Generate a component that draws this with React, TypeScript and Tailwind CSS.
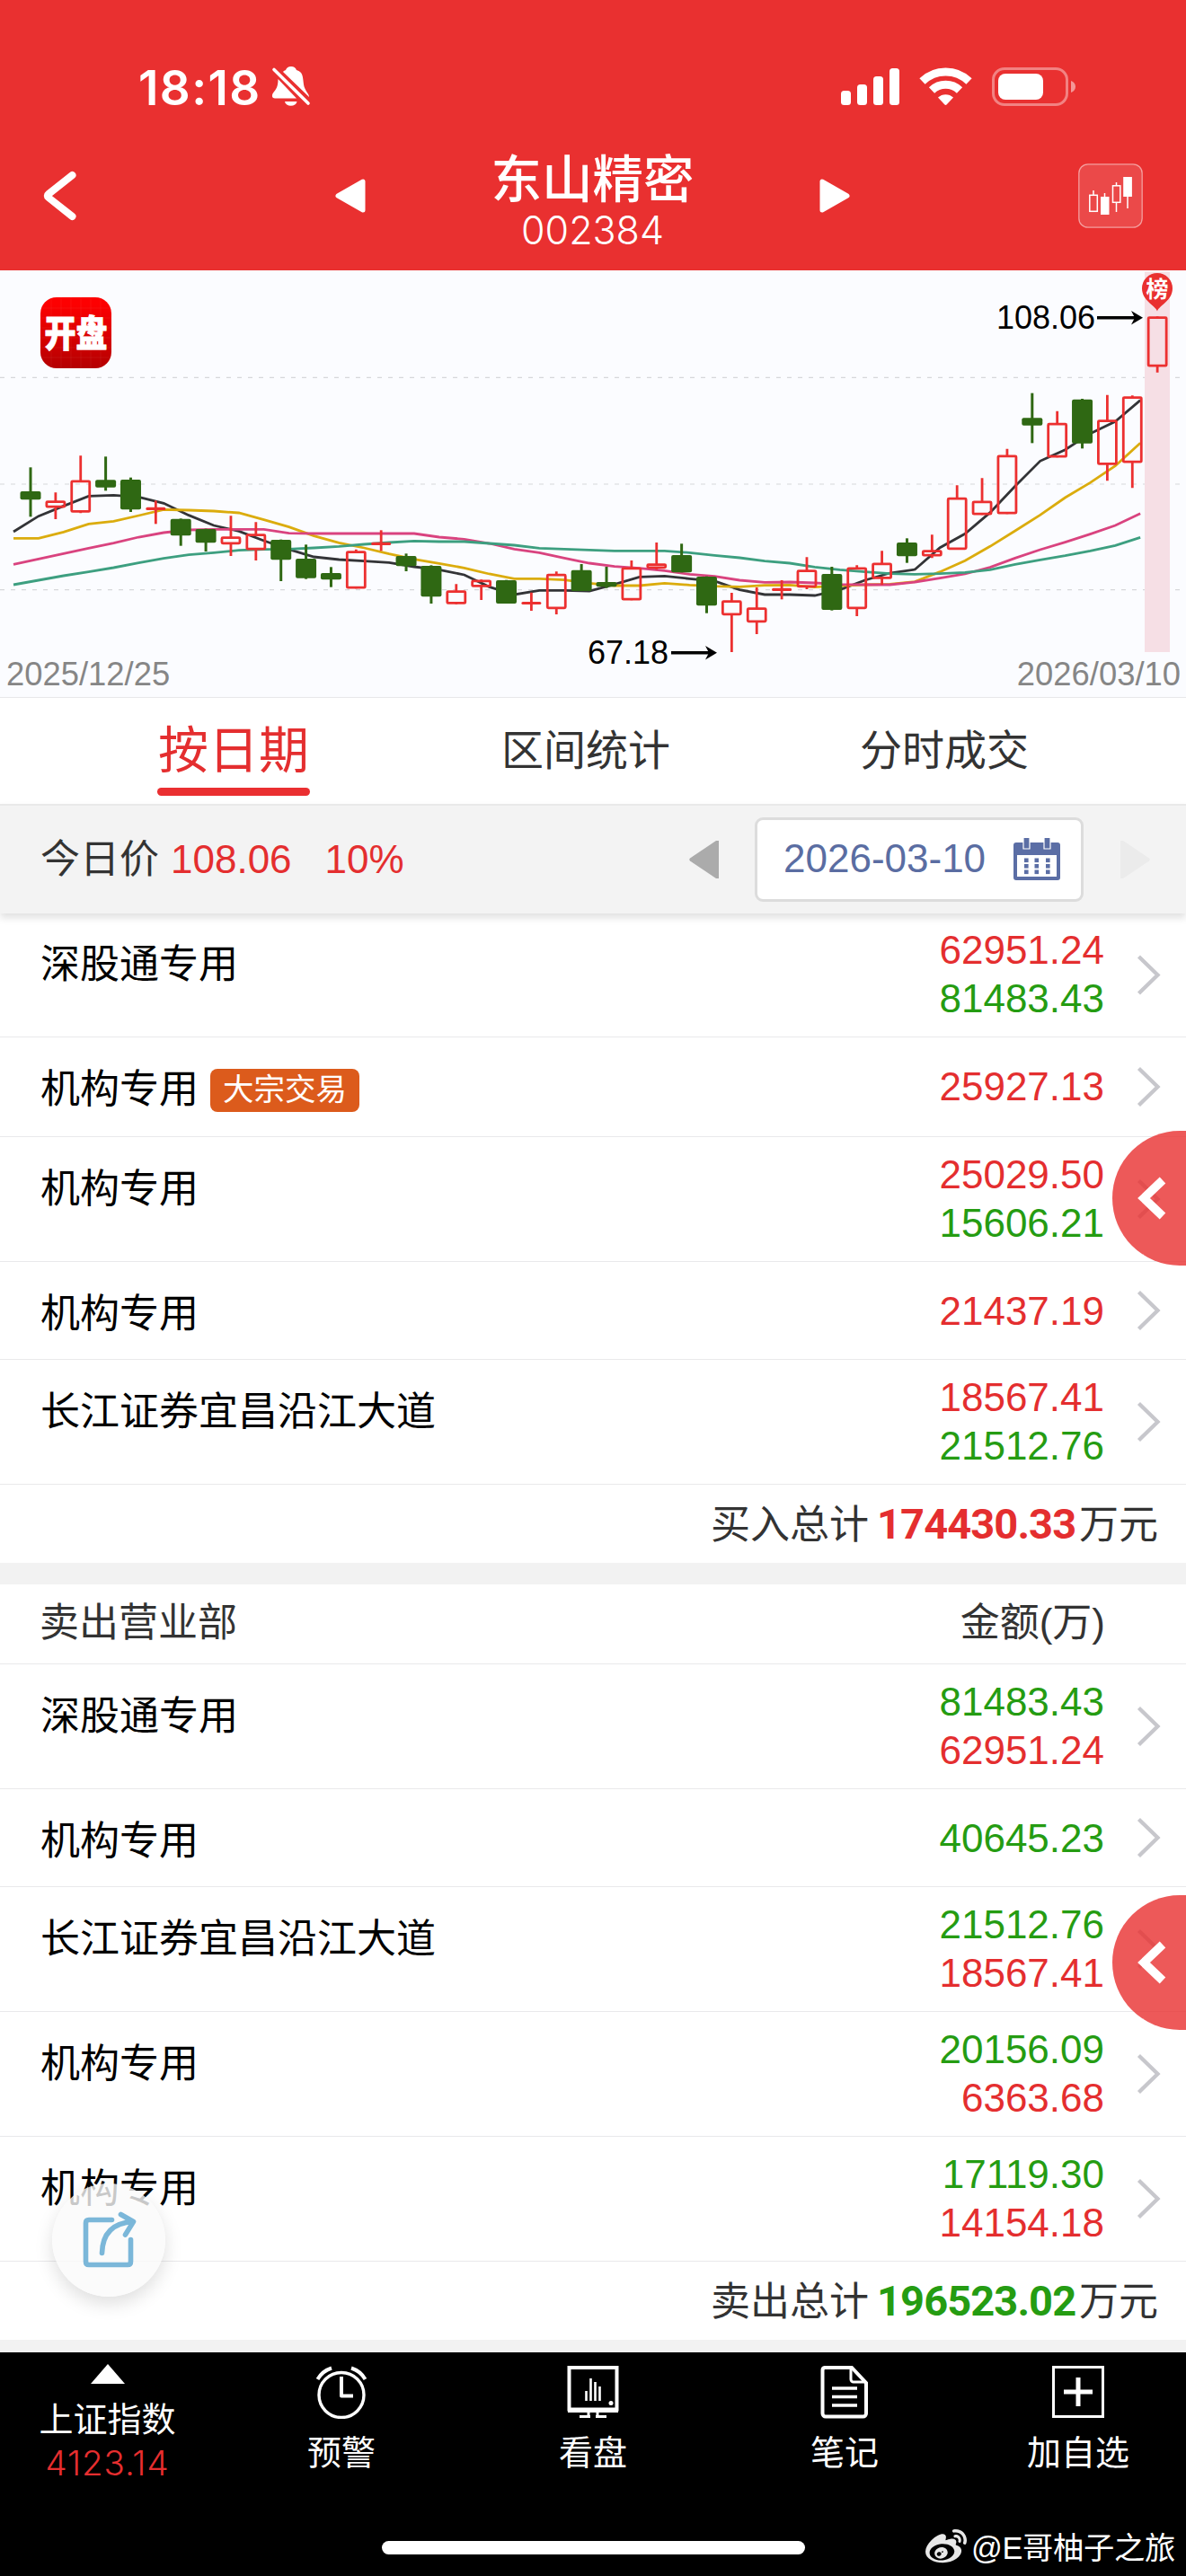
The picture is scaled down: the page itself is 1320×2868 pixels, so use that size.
import React from "react";
import { FaWeibo } from "react-icons/fa";

type Candle = [string, number, number, number, number];

// direction, high, body top, body bottom, low (thirds of a pixel)
const CANDLES: Candle[] = [
  ["g", 661, 741, 769, 826], ["r", 745, 772, 796, 834], ["r", 622, 704, 812, 814], ["g", 625, 703, 728, 739],
  ["g", 695, 702, 802, 810], ["r", 772, 794, 804, 850], ["g", 832, 833, 889, 923], ["g", 866, 867, 913, 942],
  ["r", 823, 892, 918, 957], ["r", 844, 883, 937, 972], ["g", 902, 903, 970, 1041], ["g", 919, 966, 1031, 1034],
  ["g", 994, 1014, 1036, 1061], ["r", 935, 940, 1066, 1066], ["r", 871, 911, 921, 940], ["g", 949, 957, 991, 1008],
  ["g", 988, 990, 1093, 1116], ["r", 1051, 1072, 1118, 1118], ["r", 1036, 1037, 1061, 1104], ["g", 1037, 1038, 1116, 1116],
  ["r", 1079, 1110, 1119, 1140], ["r", 1009, 1017, 1134, 1152], ["g", 984, 1004, 1074, 1074], ["g", 993, 1044, 1060, 1064],
  ["r", 972, 995, 1105, 1105], ["r", 912, 982, 999, 1003], ["g", 916, 954, 1012, 1012], ["g", 1025, 1026, 1123, 1148],
  ["r", 1080, 1105, 1155, 1278], ["r", 1062, 1129, 1179, 1218], ["r", 1038, 1064, 1074, 1102], ["r", 961, 1003, 1062, 1068],
  ["g", 993, 1017, 1137, 1139], ["r", 988, 995, 1134, 1158], ["r", 940, 980, 1034, 1054], ["g", 898, 912, 958, 980],
  ["r", 886, 937, 958, 964], ["r", 721, 762, 936, 936], ["r", 697, 773, 820, 820], ["r", 599, 620, 817, 817],
  ["g", 413, 496, 521, 580], ["r", 473, 513, 628, 628], ["g", 432, 434, 581, 598], ["r", 419, 502, 653, 706],
  ["r", 421, 424, 646, 730], ["r", 157, 157, 325, 344],
];

const AVERAGES = [
  { color: "#333437", values: [876, 824, 790, 757, 754, 760, 781, 821, 855, 874, 906, 935, 960, 969, 974, 979, 993, 1003, 1020, 1060, 1086, 1072, 1072, 1074, 1052, 1027, 1024, 1033, 1041, 1070, 1086, 1086, 1089, 1070, 1038, 1014, 1002, 929, 883, 812, 724, 640, 602, 548, 508, 437] },
  { color: "#dbac0d", values: [898, 898, 877, 850, 841, 822, 802, 804, 807, 813, 836, 860, 890, 913, 930, 950, 968, 982, 997, 1017, 1033, 1033, 1037, 1048, 1056, 1056, 1048, 1054, 1058, 1060, 1055, 1054, 1061, 1056, 1053, 1051, 1043, 1010, 973, 925, 873, 820, 762, 712, 656, 580] },
  { color: "#d9437f", values: [985, 967, 949, 931, 914, 894, 879, 870, 868, 868, 868, 881, 882, 882, 882, 882, 882, 894, 901, 915, 934, 946, 964, 981, 992, 998, 1006, 1018, 1025, 1038, 1045, 1044, 1047, 1052, 1053, 1053, 1044, 1031, 1017, 995, 964, 936, 911, 884, 855, 815] },
  { color: "#3d9f80", values: [1053, 1038, 1023, 1010, 996, 980, 965, 953, 946, 938, 935, 934, 930, 925, 918, 912, 907, 909, 909, 915, 921, 931, 934, 937, 940, 940, 940, 946, 955, 963, 974, 981, 994, 1003, 1010, 1016, 1018, 1016, 1012, 1003, 985, 970, 956, 940, 922, 895] },
];

const STEP = 27.87;

function CandleShape({ c, i }: { c: Candle; i: number }) {
  const x = 34 + STEP * i;
  const [dir, high, top, bottom, low] = [c[0], c[1] / 3, c[2] / 3, c[3] / 3, c[4] / 3];
  if (dir === "g") {
    return (
      <g fill="#2f6813">
        <rect x={x - 1.5} y={high} width={3} height={low - high} />
        <rect x={x - 11.5} y={top} width={23} height={bottom - top} rx={2} />
      </g>
    );
  }
  if (bottom - top < 4) {
    return (
      <g fill="#ec3030">
        <rect x={x - 1.4} y={high} width={2.8} height={low - high} />
        <rect x={x - 11} y={top} width={22} height={bottom - top} rx={1.5} />
      </g>
    );
  }
  return (
    <g stroke="#ec3030" strokeWidth={2.8} fill="none">
      <path d={`M${x} ${high}V${top + 1}M${x} ${bottom - 1}V${low}`} />
      <rect x={x - 10} y={top + 1.2} width={20} height={bottom - top - 2.4} rx={1} />
    </g>
  );
}

function Chart() {
  return (
    <svg className="block h-[475px] w-[1320px] bg-[#fbfcff]" viewBox="0 1 1320 475" fontFamily="'Liberation Sans','Noto Sans CJK SC',sans-serif">
      <defs>
        <linearGradient id="logo" x1="0" y1="0" x2="0" y2="1">
          <stop offset="0.1" stopColor="#fd0001" />
          <stop offset="1" stopColor="#b40001" />
        </linearGradient>
      </defs>
      {[120.3, 239, 356.7].map((y) => (
        <path key={y} d={`M0 ${y}H1320`} stroke="#d6d7da" strokeWidth={1.2} strokeDasharray="5 7" />
      ))}
      <rect x={1274} y={2.5} width={28} height={423.5} fill="#f6dfe5" />
      {AVERAGES.map((a) => (
        <polyline key={a.color} fill="none" stroke={a.color} strokeWidth={2.8} points={a.values.map((v, i) => `${15 + STEP * i},${v / 3}`).join(" ")} />
      ))}
      {CANDLES.map((c, i) => (
        <CandleShape key={i} c={c} i={i} />
      ))}
      <path d="M1288 46.5C1286 40 1271 35 1271 21a17 17 0 0 1 34 0C1305 35 1290 40 1288 46.5Z" fill="#e93030" />
      <text x={1288} y={30.5} fontSize={25} fontWeight={700} fill="#fff" textAnchor="middle">榜</text>
      <text x={1219} y={66} fontSize={36} textAnchor="end">108.06</text>
      <path d="M1221 53.7H1268" stroke="#000" strokeWidth={3.6} />
      <path d="M1259 46L1272 53.7L1259 61.5L1263 53.7Z" />
      <text x={744} y={439} fontSize={36} textAnchor="end">67.18</text>
      <path d="M747 426.8H794" stroke="#000" strokeWidth={3.6} />
      <path d="M785 419L798 426.8L785 434.6L789 426.8Z" />
      <text x={7} y={462.7} fontSize={36.4} fill="#868686">2025/12/25</text>
      <text x={1314} y={462.7} fontSize={36.4} fill="#868686" textAnchor="end">2026/03/10</text>
      <rect x={45} y={31} width={79} height={79} rx={18} fill="url(#logo)" />
      <path d="M57 31V110M68 31V110M79 31V110M90 31V110M101 31V110M112 31V110M45 43H124M45 54H124M45 65H124M45 76H124M45 87H124M45 98H124" stroke="#fff" strokeOpacity={0.06} />
      <text transform="translate(84.5 86) scale(1 1.18)" fontSize={35} fontWeight={900} fill="#fff" stroke="#fff" strokeWidth={0.8} textAnchor="middle">开盘</text>
    </svg>
  );
}

function StatusBar() {
  return (
    <div className="flex h-[150px] items-start pl-[154px] pr-[121px] pt-[72px] text-white">
      <span className="w-[140px] whitespace-nowrap font-['Inter'] text-[53px] font-semibold leading-[52px] tracking-[1.400px]">18:18</span>
      <svg className="ml-[8px] h-[48px] w-[46px]" viewBox="302 74 46 48" fill="#fff">
        <path d="M324 76c-3 0-5 1.500-6 4c-1.500.5-2 1-3 2L344 110c0-4-5-7-6-14c-1-8-.5-14-8-16c-1-2.500-3-4-6-4Z" />
        <path d="M309.500 90L330 111.500H306c-3 0-4-3-2-6c3-4 5.500-6 5.500-15.500Z" />
        <path d="M317 115h13.500a6.800 5.500 0 0 1-13.500 0Z" />
        <path d="M305 79.500L343 117" stroke="#fff" strokeWidth={3.6} strokeLinecap="round" />
      </svg>
      <div className="flex-1" />
      <svg className="h-[48px] w-[264px]" viewBox="936 72 264 48" fill="#fff">
        <rect x={937} y={101} width={11} height={16} rx={3.500} />
        <rect x={955} y={94} width={11} height={23} rx={3.500} />
        <rect x={973} y={85} width={11} height={32} rx={3.500} />
        <rect x={991} y={76} width={11} height={41} rx={3.500} />
        <g fill="none" stroke="#fff" strokeWidth={9}>
          <path d="M1027.500 90.500A37.500 37.500 0 0 1 1079.500 90.500" />
          <path d="M1038 100.500A22.500 22.500 0 0 1 1069 100.500" />
        </g>
        <path d="M1045 108.500A12.500 12.500 0 0 1 1062 108.500L1054.800 116.200a1.800 1.800 0 0 1-2.600 0Z" />
        <rect x={1106.500} y={76.500} width={82} height={40} rx={12.500} fill="none" stroke="#fff" strokeOpacity={0.4} strokeWidth={3} />
        <rect x={1112} y={82} width={50} height={29} rx={8} />
        <path d="M1193 90c3 1 5 3.500 5 6.500s-2 5.500-5 6.500Z" fillOpacity={0.5} />
      </svg>
    </div>
  );
}

function TitleBar() {
  return (
    <div className="flex h-[151px] items-start pl-[46px] pr-[48px] pt-[19px] text-white">
      <svg className="mt-[20px] h-[58px] w-[40px]" viewBox="46 189 40 58" fill="none">
        <path d="M80.500 195L54 216q-2.500 2 0 4L80.500 241" stroke="#fff" strokeWidth={8} strokeLinecap="round" />
      </svg>
      <div className="ml-[285px] flex w-[577px] items-start justify-between">
        <svg className="mt-[29px] h-[40px] w-[36px]" viewBox="0 0 36 40">
          <path d="M33 4V36L5 20Z" fill="#fff" stroke="#fff" strokeWidth={5} strokeLinejoin="round" />
        </svg>
        <div className="flex flex-col items-center">
          <div className="text-[56.500px] font-medium leading-[64px]">东山精密</div>
          <div className="mt-[-7px] font-['Inter'] text-[43px] font-light leading-[60px]">002384</div>
        </div>
        <svg className="mt-[29px] h-[40px] w-[36px]" viewBox="0 0 36 40">
          <path d="M3 4V36L31 20Z" fill="#fff" stroke="#fff" strokeWidth={5} strokeLinejoin="round" />
        </svg>
      </div>
      <svg className="ml-auto mt-[13px] h-[72px] w-[72px]" viewBox="1200 182 72 72">
        <rect x={1200.800} y={182.800} width={70.400} height={70.400} rx={10} fill="#fff" fillOpacity={0.12} stroke="#fff" strokeOpacity={0.5} strokeWidth={1.300} />
        <g stroke="#fff" strokeWidth={1.500} fill="none">
          <path d="M1217 212V217M1229.500 215V220M1242.500 203V207M1242.500 226V236M1255 218V232" />
          <rect x={1212.800} y={217.300} width={8.500} height={18} />
          <rect x={1238.500} y={206.800} width={8.300} height={18.500} />
        </g>
        <path d="M1225 219h9.500v20h-9.500zM1250.200 197h9.700v22h-9.700z" fill="#fff" />
      </svg>
    </div>
  );
}

function Tabs() {
  return (
    <div className="flex h-[119px] items-start border-t border-[#e8e8ea] bg-white pl-[175px] text-[47px] text-[#333]">
      <div className="flex w-[170px] flex-col items-center text-[#e42e2f]">
        <div className="mt-[19px] text-[56px] leading-[80px]">按日期</div>
        <div className="mt-[1px] h-[9px] w-[170px] rounded-full bg-[#ea2f31]" />
      </div>
      <div className="ml-[213px] mt-[19px] leading-[80px]">区间统计</div>
      <div className="ml-[211px] mt-[19px] leading-[80px]">分时成交</div>
    </div>
  );
}

function DateBar() {
  return (
    <div className="relative z-10 flex h-[122px] items-center border-t-2 border-[#e9e9e9] bg-[#f3f3f3] pl-[45px] text-[44px] shadow-[0_5px_8px_rgba(0,0,0,0.12)]">
      <span className="text-[#333]">今日价</span>
      <span className="ml-[13px] text-[#e42e2f]">108.06</span>
      <span className="ml-[37px] text-[#e42e2f]">10%</span>
      <div className="flex-1" />
      <svg className="h-[42px] w-[34px]" viewBox="0 0 34 42">
        <path d="M33 0V42H30L1 22.500q-1.500-1.500 0-3L30 0Z" fill="#ababab" />
      </svg>
      <div className="ml-[39px] flex h-[94px] w-[366px] items-center rounded-[9px] border-[3px] border-[#dcdcdc] bg-white pl-[29px] text-[#5a6da2]">
        <span className="mt-[-3px] w-[226px]">2026-03-10</span>
        <svg className="ml-[30px] h-[48px] w-[52px]" viewBox="0 0 52 48">
          <path d="M3 5H49a3 3 0 0 1 3 3V44a3 3 0 0 1-3 3H3a3 3 0 0 1-3-3V8A3 3 0 0 1 3 5Z" fill="#5b6ea5" />
          <path d="M4 19H48V43H4Z" fill="#fff" />
          <path d="M11 -1h7v13h-7zM34 -1h7v13h-7z" fill="#5b6ea5" stroke="#fff" strokeWidth={1.200} />
          <g fill="#5b6ea5">
            {[12, 23.500, 36].map((x) => [22.500, 29, 35.500].map((y) => <rect key={`${x}-${y}`} x={x} y={y} width={4.600} height={4.600} />))}
          </g>
        </svg>
      </div>
      <svg className="ml-[40px] mr-[40px] h-[42px] w-[34px]" viewBox="0 0 34 42">
        <path d="M1 0V42H4L33 22.500q1.500-1.500 0-3L4 0Z" fill="#ebebeb" />
      </svg>
    </div>
  );
}

type RowProps = { name: string; amounts: [string, "buy" | "sell"][]; height: string; badge?: string; trim?: boolean };

function Row({ name, amounts, height, badge, trim }: RowProps) {
  return (
    <div className={`flex items-start border-b border-[#e9e9eb] pl-[45px] text-[44px] ${height}`}>
      <span className={`leading-[60px] text-black ${trim ? "mt-[27px]" : "mt-[28px]"}`}>{name}</span>
      {badge && <span className="ml-[13px] mt-[35px] h-[48px] w-[166px] rounded-[8px] bg-[#dc5b1c] text-center text-[34.500px] leading-[46px] text-white">{badge}</span>}
      <div className="flex-1" />
      <div className={`text-right leading-[54px] ${amounts.length === 1 ? "mt-[28px]" : trim ? "mt-[14px]" : "mt-[15px]"}`}>
        {amounts.map(([v, k]) => (
          <div key={v} className={k === "buy" ? "text-[#e42e2f]" : "text-[#259c12]"}>{v}</div>
        ))}
      </div>
      <svg className="ml-[35px] mr-[26px] h-full w-[30px]" viewBox="0 0 30 46" fill="none">
        <path d="M3.500 2.500L24.500 23L3.500 43.500" stroke="#c7c7cc" strokeWidth={4.300} />
      </svg>
    </div>
  );
}

function Total({ label, value, tone }: { label: string; value: string; tone: string }) {
  return (
    <div className="flex h-[87px] items-center justify-end pr-[31px] pt-[2px] text-[44px] text-[#333]">
      <span>{label}</span>
      <span className={`ml-[9px] mr-[6px] w-[219px] text-center font-['Roboto'] text-[47px] font-bold tracking-[-0.900px] ${tone}`}>{value}</span>
      <span>万元</span>
    </div>
  );
}

function SideHandle({ place }: { place: string }) {
  return (
    <div className={`absolute right-0 z-20 flex h-[150px] w-[82px] items-center rounded-l-full bg-[#e93030]/80 pl-[28px] ${place}`}>
      <svg className="h-[50px] w-[34px]" viewBox="0 0 34 50" fill="none">
        <path d="M28 5L7 25L28 45" stroke="#fff" strokeWidth={9.500} />
      </svg>
    </div>
  );
}

function NavItem({ label, children, width }: { label: string; children: React.ReactNode; width: string }) {
  return (
    <div className={`flex flex-col items-center pt-[14px] ${width}`}>
      <svg className="h-[60px] w-[60px]" viewBox="0 0 60 60" fill="none" stroke="#fff" strokeWidth={3.400}>{children}</svg>
      <div className="mt-[10px] text-[38px] leading-[56px]">{label}</div>
    </div>
  );
}

function BottomBar() {
  return (
    <div className="relative h-[249px] bg-black text-white">
      <div className="flex">
        <div className="flex w-[239px] flex-col items-center">
          <svg className="mt-[13px] h-[22px] w-[38px]" viewBox="0 0 38 22"><path d="M19 0L38 22H0Z" fill="#fff" /></svg>
          <div className="mt-[12px] text-[38px] leading-[56px]">上证指数</div>
          <div className="mt-[-2px] font-['Inter'] text-[38.500px] font-light leading-[44px] tracking-[0.900px] text-[#e62e2f]">4123.14</div>
        </div>
        <NavItem label="预警" width="w-[282px]">
          <circle cx={30} cy={33.500} r={25} />
          <path d="M30 13V34.500H43" strokeWidth={4} strokeLinejoin="round" />
          <path d="M3.500 16Q8.500 7 19 3.500M56.500 16Q51.500 7 41 3.500" strokeWidth={4} />
        </NavItem>
        <NavItem label="看盘" width="w-[278px]">
          <path d="M3.500 3H56.500V49.500H3.500Z" strokeWidth={4} />
          <path d="M2 50.500H58" strokeWidth={5} />
          <path d="M15 57.500H27M33 57.500H45M25 52V58M35 52V58" strokeWidth={3} />
          <path d="M22.500 29V40M27.500 15V40M32.500 19V40M37.500 24V40" strokeWidth={2.600} />
          <circle cx={50} cy={42.500} r={2.500} fill="#fff" stroke="none" />
        </NavItem>
        <NavItem label="笔记" width="w-[282px]">
          <path d="M8 3H38L54 20V54a3.500 3.500 0 0 1-3.500 3.500H9A3.500 3.500 0 0 1 5.500 54V6A3 3 0 0 1 8 3Z" strokeWidth={4} />
          <path d="M37 3V16a3 3 0 0 0 3 3H54" strokeWidth={3} />
          <path d="M16 26H44M16 35.500H44M16 45H44" strokeWidth={3.500} />
        </NavItem>
        <NavItem label="加自选" width="w-[238px]">
          <rect x={2.500} y={2.500} width={55} height={55} strokeWidth={3} />
          <path d="M30 14V46M14 30H46" strokeWidth={5} />
        </NavItem>
      </div>
      <div className="absolute bottom-[24px] left-[425px] h-[15px] w-[471px] rounded-full bg-white" />
      <div className="absolute bottom-[7px] right-[12px] flex items-center text-[34.300px] leading-[48px]">
        <FaWeibo className="mr-[5px] mt-[-2px] h-[46px] w-[46px] text-[#e8e8e8]" />
        <span className="tracking-[-0.300px]">@E哥柚子之旅</span>
      </div>
    </div>
  );
}

export default function App() {
  return (
    <div lang="zh-CN" className="relative h-[2868px] w-[1320px] overflow-hidden bg-white font-['Liberation_Sans','Noto_Sans_CJK_SC',sans-serif]">
      <header className="h-[301px] bg-[#e93030]">
        <StatusBar />
        <TitleBar />
      </header>
      <Chart />
      <Tabs />
      <DateBar />
      <main>
        <Row trim height="h-[138px]" name="深股通专用" amounts={[["62951.24", "buy"], ["81483.43", "sell"]]} />
        <Row height="h-[111px]" name="机构专用" badge="大宗交易" amounts={[["25927.13", "buy"]]} />
        <Row height="h-[139px]" name="机构专用" amounts={[["25029.50", "buy"], ["15606.21", "sell"]]} />
        <Row height="h-[109px]" name="机构专用" amounts={[["21437.19", "buy"]]} />
        <Row height="h-[139px]" name="长江证券宜昌沿江大道" amounts={[["18567.41", "buy"], ["21512.76", "sell"]]} />
        <Total label="买入总计" value="174430.33" tone="text-[#e42e2f]" />
        <div className="h-[24px] bg-[#f2f2f2]" />
        <div className="flex h-[89px] items-center justify-between border-b border-[#e9e9eb] pb-[2px] pl-[44px] pr-[90px] text-[44px] text-[#333]">
          <span>卖出营业部</span>
          <span>金额(万)</span>
        </div>
        <Row height="h-[139px]" name="深股通专用" amounts={[["81483.43", "sell"], ["62951.24", "buy"]]} />
        <Row height="h-[109px]" name="机构专用" amounts={[["40645.23", "sell"]]} />
        <Row height="h-[139px]" name="长江证券宜昌沿江大道" amounts={[["21512.76", "sell"], ["18567.41", "buy"]]} />
        <Row height="h-[139px]" name="机构专用" amounts={[["20156.09", "sell"], ["6363.68", "buy"]]} />
        <Row height="h-[139px]" name="机构专用" amounts={[["17119.30", "sell"], ["14154.18", "buy"]]} />
        <Total label="卖出总计" value="196523.02" tone="text-[#259c12]" />
        <div className="h-[14px] bg-[#f2f2f2]" />
      </main>
      <BottomBar />
      <SideHandle place="top-[1259px]" />
      <SideHandle place="top-[2110px]" />
      <div className="absolute left-[58px] top-[2431px] z-20 flex h-[126px] w-[126px] items-center justify-center rounded-full bg-[#fafafa]/80 shadow-[0_8px_20px_rgba(0,0,0,0.13)]">
        <svg className="h-[66px] w-[62px]" viewBox="91 2458 62 66" fill="none" stroke="#7bb7d9" strokeWidth={5.600} strokeLinecap="round" strokeLinejoin="round">
          <path d="M125.500 2468.500H100q-3.500 0-3.500 3.500V2515q0 3.500 3.500 3.500H143q3.500 0 3.500-3.500V2490.500" />
          <path d="M114.500 2505.500C115 2486 124 2472 149 2470.500M135.500 2462.500L149.500 2470.500L140.500 2485" />
        </svg>
      </div>
    </div>
  );
}
